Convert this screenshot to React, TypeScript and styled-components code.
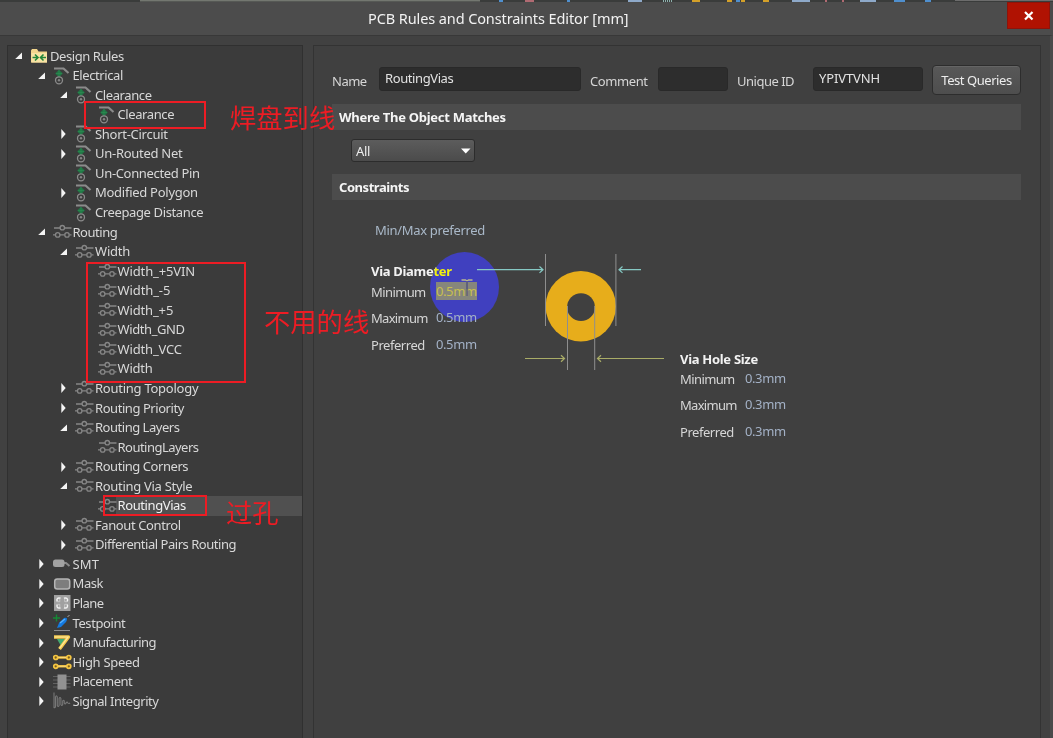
import React from 'react';
import styled, { createGlobalStyle } from 'styled-components';

const GlobalStyle = createGlobalStyle`
  html, body { margin: 0; padding: 0; background: #404040; overflow: hidden; }
  * { box-sizing: border-box; }
  body { font-family: 'Noto Sans', 'Open Sans', sans-serif; font-size: 13px; color: #d6d6d6; }
`;

const Window = styled.div`
  position: relative;
  display: flex;
  flex-direction: column;
  width: 1053px;
  height: 738px;
  background: #414141;
  overflow: hidden;
`;

const BackdropStrip = styled.svg`
  display: block;
  flex: none;
`;

const TitleBar = styled.header`
  display: flex;
  flex: none;
  height: 34px;
  background: #4c4c4c;
  border-bottom: 1px solid #383838;
  border-right: 3px solid #4a4a4a;
`;

const Title = styled.h1`
  flex: 1;
  margin: 0;
  padding-left: 368px;
  font-size: 14.5px;
  font-weight: 400;
  line-height: 32px;
  letter-spacing: -0.1px;
  color: #f2f2f2;
  white-space: nowrap;
`;

const CloseButton = styled.button`
  display: flex;
  align-items: center;
  justify-content: center;
  width: 43px;
  height: 27px;
  padding: 0;
  border: 1px solid #8f1309;
  background: #b01202;
`;

const Body = styled.div`
  display: flex;
  flex: 1;
  min-height: 0;
  padding: 9px 9px 0 7px;
  gap: 10px;
  border-right: 3px solid #4a4a4a;
`;

const Sidebar = styled.nav`
  flex: none;
  width: 296px;
  padding-top: 0.4px;
  border: 1px solid #303030;
  border-bottom: 0;
  background: #3b3b3b;
`;

const Row = styled.div<{ $level: number; $selected?: boolean }>`
  display: flex;
  align-items: center;
  height: 19.55px;
  padding-left: ${(p) => p.$level * 22.5}px;
  background: ${(p) =>
    p.$selected ? 'linear-gradient(90deg, transparent 108px, #505050 108px)' : 'none'};
  color: ${(p) => (p.$selected ? '#f0f0f0' : '#d8d8d8')};
  white-space: nowrap;
`;

const ArrowSlot = styled.span`
  display: flex;
  width: 15px;
  height: 18px;
  margin-right: 7px;
`;

const IconSlot = styled.span`
  display: flex;
  width: 20px;
  height: 18px;
`;

const RowLabel = styled.span<{ $ls?: number }>`
  line-height: 19px;
  letter-spacing: ${(p) => p.$ls ?? -0.2}px;
`;

const Detail = styled.main`
  flex: 1;
  padding: 19px 19px 0 18px;
  border: 1px solid #333;
  border-bottom: 0;
  background: #404040;
`;

const FormRow = styled.div`
  display: flex;
  align-items: flex-start;
  height: 39px;
`;

const FieldLabel = styled.label<{ $w: number; $ls?: number }>`
  width: ${(p) => p.$w}px;
  padding-top: 7px;
  line-height: 18px;
  letter-spacing: ${(p) => p.$ls ?? -0.2}px;
  white-space: nowrap;
`;

const Field = styled.div<{ $w: number; $gap: number; $ls?: number }>`
  width: ${(p) => p.$w}px;
  height: 24px;
  margin: 2px ${(p) => p.$gap}px 0 0;
  padding-left: 5px;
  border: 1px solid #292929;
  border-radius: 3px;
  background: #2d2d2d;
  color: #e2e2e2;
  line-height: 21px;
  letter-spacing: ${(p) => p.$ls ?? -0.2}px;
`;

const Button = styled.button`
  width: 89px;
  height: 30px;
  padding: 0;
  border: 1px solid #2d2d2d;
  border-radius: 4px;
  background: linear-gradient(#585858, #4e4e4e);
  box-shadow: inset 0 1px #656565;
  font: inherit;
  color: #ececec;
  letter-spacing: -0.45px;
  white-space: nowrap;
`;

const SectionHeader = styled.h2<{ $ls?: number }>`
  height: 26px;
  margin: 0;
  padding-left: 7px;
  background: #4c4c4c;
  color: #f5f5f5;
  font-size: 13px;
  font-weight: 700;
  line-height: 26px;
  letter-spacing: ${(p) => p.$ls ?? -0.28}px;
`;

const Select = styled.div`
  display: flex;
  align-items: center;
  justify-content: space-between;
  width: 124px;
  height: 23px;
  margin: 9px 0 12px 19px;
  padding: 0 3px 0 4px;
  border: 1px solid #2c2c2c;
  border-radius: 3px;
  background: linear-gradient(#5c5c5c, #4b4b4b);
  color: #ececec;
  letter-spacing: -0.3px;
`;

const Preference = styled.div`
  padding: 21px 0 0 43px;
  line-height: 18px;
  letter-spacing: -0.32px;
  color: #a9b8c8;
`;

const Constraints = styled.div`
  display: flex;
  padding: 14px 0 0 39px;
`;

const MeasureRow = styled.div`
  display: flex;
  align-items: center;
  height: 27px;
`;

const Measures = styled.section<{ $w: number; $top: number; $first: number }>`
  width: ${(p) => p.$w}px;
  padding-top: ${(p) => p.$top}px;
  ${MeasureRow}:first-of-type {
    height: ${(p) => p.$first}px;
    margin-bottom: 2px;
  }
`;

const MeasureTitle = styled.h3`
  margin: 0;
  font-size: 13px;
  font-weight: 700;
  line-height: 18px;
  letter-spacing: -0.3px;
  color: #f2f2f2;
  white-space: nowrap;
`;

const MeasureLabel = styled.span<{ $ls?: number }>`
  width: 65px;
  padding-top: 1px;
  letter-spacing: ${(p) => p.$ls ?? -0.6}px;
`;

const Value = styled.span<{ $selected?: boolean; $raised?: boolean }>`
  position: relative;
  z-index: ${(p) => (p.$raised ? 2 : 'auto')};
  width: 41px;
  height: 17px;
  line-height: 17px;
  letter-spacing: -0.4px;
  background: ${(p) => (p.$selected ? '#86867c' : 'none')};
  color: ${(p) => (p.$selected ? '#c8bf50' : '#a3b1c6')};
`;

const Diagram = styled.svg`
  position: relative;
  z-index: 2;
  flex: none;
  margin-right: 16px;
`;

const Spotlight = styled.div`
  position: absolute;
  left: 430px;
  top: 252px;
  width: 69px;
  height: 70px;
  border-radius: 50%;
  background: #0000ff;
  mix-blend-mode: difference;
`;

const SelectedValue = styled(Value)`
  z-index: 2;
  height: 18px;
  line-height: 18px;
`;

const Beam = styled.svg`
  position: absolute;
  left: 460px;
  top: 278px;
  z-index: 3;
`;

const MarkBox = styled.div<{ $x: number; $y: number; $w: number; $h: number }>`
  position: absolute;
  left: ${(p) => p.$x}px;
  top: ${(p) => p.$y}px;
  width: ${(p) => p.$w}px;
  height: ${(p) => p.$h}px;
  border: 2px solid #ed1c24;
  z-index: 4;
`;

const MarkText = styled.div<{ $x: number; $y: number }>`
  position: absolute;
  left: ${(p) => p.$x}px;
  top: ${(p) => p.$y}px;
  z-index: 4;
  font-family: 'Noto Sans CJK SC', sans-serif;
  font-size: 26.3px;
  font-weight: 400;
  line-height: 32px;
  color: #ed1c24;
  white-space: nowrap;
`;

type Kind =
  | 'folder' | 'electrical' | 'routing' | 'smt' | 'mask' | 'plane'
  | 'testpoint' | 'manufacturing' | 'speed' | 'placement' | 'signal';

const drawings: Record<Kind, React.ReactNode> = {
  folder: (
    <>
      <path d="M1 3.500V15.500H17V4.500H8.500L7 2H2z" fill="#f2d58c" />
      <path d="M1.500 6H17v9.500H1.500z" fill="#f8e3a4" />
      <path d="M2.500 10.500h5M5 7.500l3 3-3 3M16 10.500h-5M13.500 7.500l-3 3 3 3" stroke="#23863a" strokeWidth="1.600" fill="none" />
    </>
  ),
  electrical: (
    <>
      <path d="M1 1.500h9.500l5 4.500" stroke="#8b8b8b" strokeWidth="2.200" fill="none" />
      <path d="M6 2.800l3.800 3.700L6 10.200 2.200 6.500z" fill="#207544" />
      <path d="M6 3.500v6M3.500 6.500h5" stroke="#35995c" strokeWidth=".8" strokeDasharray="1 1" />
      <circle cx="6" cy="13.300" r="3.500" stroke="#8b8b8b" strokeWidth="1.300" fill="none" />
      <circle cx="6" cy="13.300" r="1.200" fill="#858585" />
    </>
  ),
  routing: (
    <g stroke="#868686" strokeWidth="1.300" fill="none">
      <path d="M1 5h6M11.500 5H18.500M0 11.900h2.500M7 11.900h4.500M16.500 11.900h2" />
      <circle cx="9.300" cy="4.700" r="2.200" />
      <circle cx="4.700" cy="11.900" r="2.200" />
      <circle cx="14" cy="11.900" r="2.200" />
    </g>
  ),
  smt: (
    <>
      <path d="M10 8h3l3.500 3" stroke="#8a8a8a" strokeWidth="2" fill="none" />
      <rect x="0" y="4.500" width="11.500" height="7.500" rx="2.500" fill="#a2a2a2" />
    </>
  ),
  mask: <rect x="1.700" y="4" width="15" height="10" rx="2.500" fill="#7d7d7d" stroke="#b5b5b5" strokeWidth="1.500" />,
  plane: (
    <>
      <rect x="1" y="1" width="16.500" height="16" fill="#a0a0a0" />
      <g stroke="#f2f2f2" strokeWidth="1.500" fill="none">
        <path d="M4.300 7.500C3 4.800 5 3.300 7.500 4.300M11 4.300c2.500-1 4.500.5 3.200 3.200M4.300 10.500c-1.300 2.700.7 4.200 3.200 3.200M11 13.700c2.500 1 4.500-.5 3.200-3.200" />
        <path d="M4.500 7.700h2.300V4.800M14 7.700h-2.300V4.800M4.500 10.300h2.300v2.900M14 10.300h-2.300v2.900" stroke="#cfcfcf" strokeWidth=".8" />
      </g>
    </>
  ),
  testpoint: (
    <>
      <path d="M4 14l2-5 5-5c3-1 4 0 2 4l-5 5z" fill="#1479df" />
      <path d="M7 9l5-4" stroke="#58b3ff" strokeWidth="1.500" />
      <path d="M0 4h7M3.500.5v7" stroke="#158a35" strokeWidth="1.300" />
      <path d="M14.500 3l2-2" stroke="#aaa" />
      <path d="M1 16.500h16" stroke="#8c8c8c" />
    </>
  ),
  manufacturing: (
    <>
      <path d="M4 5h9l-5 7z" fill="#43a972" />
      <path d="M1 3h14.500L6.500 15" stroke="#f3c94b" strokeWidth="3.400" fill="none" strokeLinejoin="round" />
      <path d="M1.500 3h13.500L6.500 14.500" stroke="#ffe9a0" strokeWidth="1.200" fill="none" />
    </>
  ),
  speed: (
    <>
      <path d="M3 4.500h12.500M3 13.300h12.500" stroke="#e9b93c" strokeWidth="2.600" />
      <path d="M3 4.500h12.500M3 13.300h12.500" stroke="#ffe28a" strokeWidth=".8" />
      <g fill="#7a5e1c" stroke="#f5c542" strokeWidth="1.700">
        <circle cx="2.700" cy="4.500" r="2" /><circle cx="15.800" cy="4.500" r="2" />
        <circle cx="2.700" cy="13.300" r="2" /><circle cx="15.800" cy="13.300" r="2" />
      </g>
    </>
  ),
  placement: (
    <>
      <path d="M0 3.500h17.500M0 7h17.500M0 10.500h17.500M0 14h17.500" stroke="#626262" />
      <rect x="4.500" y="1.500" width="9" height="15" fill="#929292" />
    </>
  ),
  signal: (
    <path
      d="M1 .5V15.500q1 .8 1.500-1V5q.9-2.500 1.800 0v8.500q.9 2 1.800 0V6.500q.9-2 1.800 0v6q.9 1.800 1.800 0V9q.9-1.500 1.600 0v2q1 2 2-.5 1-1 1.600.5.8 1 2.200 0"
      stroke="#777"
      strokeWidth="1.100"
      fill="none"
    />
  ),
};

function Icon({ kind }: { kind: Kind }) {
  return <svg width="19" height="18" viewBox="0 0 19 18">{drawings[kind]}</svg>;
}

type Node = [level: number, state: '' | 'open' | 'shut', kind: Kind, label: string, spacing?: number];

const nodes: Node[] = [
  [0, 'open', 'folder', 'Design Rules', -0.43],
  [1, 'open', 'electrical', 'Electrical', -0.4],
  [2, 'open', 'electrical', 'Clearance', -0.4],
  [3, '', 'electrical', 'Clearance', -0.4],
  [2, 'shut', 'electrical', 'Short-Circuit', -0.28],
  [2, 'shut', 'electrical', 'Un-Routed Net', -0.28],
  [2, '', 'electrical', 'Un-Connected Pin', -0.33],
  [2, 'shut', 'electrical', 'Modified Polygon', -0.27],
  [2, '', 'electrical', 'Creepage Distance', -0.38],
  [1, 'open', 'routing', 'Routing', -0.48],
  [2, 'open', 'routing', 'Width'],
  [3, '', 'routing', 'Width_+5VIN', -0.12],
  [3, '', 'routing', 'Width_-5', -0.1],
  [3, '', 'routing', 'Width_+5', -0.14],
  [3, '', 'routing', 'Width_GND', -0.4],
  [3, '', 'routing', 'Width_VCC', -0.15],
  [3, '', 'routing', 'Width'],
  [2, 'shut', 'routing', 'Routing Topology', -0.25],
  [2, 'shut', 'routing', 'Routing Priority', -0.44],
  [2, 'open', 'routing', 'Routing Layers', -0.48],
  [3, '', 'routing', 'RoutingLayers', -0.52],
  [2, 'shut', 'routing', 'Routing Corners', -0.45],
  [2, 'open', 'routing', 'Routing Via Style', -0.3],
  [3, '', 'routing', 'RoutingVias', -0.4],
  [2, 'shut', 'routing', 'Fanout Control', -0.4],
  [2, 'shut', 'routing', 'Differential Pairs Routing', -0.47],
  [1, 'shut', 'smt', 'SMT', 0.1],
  [1, 'shut', 'mask', 'Mask', -0.4],
  [1, 'shut', 'plane', 'Plane', -0.55],
  [1, 'shut', 'testpoint', 'Testpoint', -0.4],
  [1, 'shut', 'manufacturing', 'Manufacturing', -0.56],
  [1, 'shut', 'speed', 'High Speed', -0.3],
  [1, 'shut', 'placement', 'Placement', -0.5],
  [1, 'shut', 'signal', 'Signal Integrity', -0.44],
];

function Tree() {
  return (
    <Sidebar>
      {nodes.map(([level, state, kind, label, spacing], i) => (
        <Row key={i} $level={level} $selected={label === 'RoutingVias'}>
          <ArrowSlot>
            {state && (
              <svg width="15" height="18">
                <path d={state === 'open' ? 'M14 5.500v6.500H7.200z' : 'M8.300 4v10l4.400-5z'} fill="#f4f4f4" />
              </svg>
            )}
          </ArrowSlot>
          <IconSlot><Icon kind={kind} /></IconSlot>
          <RowLabel $ls={spacing}>{label}</RowLabel>
        </Row>
      ))}
    </Sidebar>
  );
}

function ViaDiagram() {
  return (
    <Diagram width="187" height="118" viewBox="477 253 187 118">
      <circle cx="580.800" cy="306.300" r="35.200" fill="#e7ad1b" />
      <circle cx="581" cy="307.200" r="13.900" fill="#404040" />
      <g stroke="#8e8e8e" fill="none">
        <path d="M545.500 254v72M615.900 254v72M567.500 306v64M594.700 306v64" />
      </g>
      <g stroke="#86c9c4" strokeWidth="1.200" fill="none">
        <path d="M477 269.700h66M539.500 266.500l3.500 3.200-3.500 3.200M641 269.700h-22M622.500 266.500l-3.500 3.200 3.500 3.200" />
      </g>
      <g stroke="#a9ac67" strokeWidth="1.200" fill="none">
        <path d="M525 358.500h40M561 355.300l3.500 3.200-3.500 3.200M664 358.500h-66.500M601 355.300l-3.500 3.200 3.500 3.200" />
      </g>
    </Diagram>
  );
}

export default function App() {
  return (
    <Window>
      <GlobalStyle />
      <BackdropStrip width="1053" height="2">
        <rect width="1053" height="2" fill="#3a3c3b" />
        <rect x="140" width="340" height="1.500" fill="#737770" />
        <rect x="955" width="98" height="1" fill="#6c6c6c" />
        <path d="M499 1h4M567 1h3M736 1h4M894 1h11M925 1h6" stroke="#4f8fce" strokeWidth="2" />
        <path d="M628 1h14M792 1h18M860 1h16" stroke="#8ea9c9" strokeWidth="2" />
        <path d="M692 1h8M727 1h5M741 1h4M763 1h6" stroke="#d4a029" strokeWidth="2" />
        <path d="M525 1h9M825 1h2M842 1h2" stroke="#b06a72" strokeWidth="2" />
        <path d="M663 1h10" stroke="#8db1ae" strokeWidth="2" strokeDasharray="1 1" />
      </BackdropStrip>
      <TitleBar>
        <Title>PCB Rules and Constraints Editor [mm]</Title>
        <CloseButton aria-label="Close">
          <svg width="12" height="12"><path d="M2 2l7.500 7.500M9.500 2L2 9.500" stroke="#fff" strokeWidth="2.200" /></svg>
        </CloseButton>
      </TitleBar>
      <Body>
        <Tree />
        <Detail>
          <FormRow>
            <FieldLabel $w={47} $ls={-0.5}>Name</FieldLabel>
            <Field $w={202} $gap={9} $ls={-0.4}>RoutingVias</Field>
            <FieldLabel $w={68} $ls={-0.4}>Comment</FieldLabel>
            <Field $w={70} $gap={9} />
            <FieldLabel $w={76} $ls={-0.5}>Unique ID</FieldLabel>
            <Field $w={110} $gap={9} $ls={-0.12}>YPIVTVNH</Field>
            <Button>Test Queries</Button>
          </FormRow>
          <SectionHeader>Where The Object Matches</SectionHeader>
          <Select>
            All
            <svg width="10" height="6"><path d="M0 .5h9.500L4.750 5.500z" fill="#fff" /></svg>
          </Select>
          <SectionHeader $ls={-0.45}>Constraints</SectionHeader>
          <Preference>Min/Max preferred</Preference>
          <Constraints>
            <Measures $w={106} $top={9} $first={22}>
              <MeasureTitle>Via Diameter</MeasureTitle>
              <MeasureRow><MeasureLabel>Minimum</MeasureLabel><SelectedValue $selected>0.5mm</SelectedValue></MeasureRow>
              <MeasureRow><MeasureLabel $ls={-0.7}>Maximum</MeasureLabel><Value $raised>0.5mm</Value></MeasureRow>
              <MeasureRow><MeasureLabel $ls={-0.45}>Preferred</MeasureLabel><Value>0.5mm</Value></MeasureRow>
            </Measures>
            <ViaDiagram />
            <Measures $w={110} $top={97} $first={21}>
              <MeasureTitle>Via Hole Size</MeasureTitle>
              <MeasureRow><MeasureLabel>Minimum</MeasureLabel><Value>0.3mm</Value></MeasureRow>
              <MeasureRow><MeasureLabel $ls={-0.7}>Maximum</MeasureLabel><Value>0.3mm</Value></MeasureRow>
              <MeasureRow><MeasureLabel $ls={-0.45}>Preferred</MeasureLabel><Value>0.3mm</Value></MeasureRow>
            </Measures>
          </Constraints>
        </Detail>
      </Body>
      <Spotlight />
      <Beam width="14" height="20">
        <path d="M1.500 2h4l1.500 1 1.500-1h4" stroke="#b9b791" strokeWidth="1.300" fill="none" />
        <path d="M7 3v15" stroke="#4a4d80" strokeWidth="1.300" />
      </Beam>
      <MarkBox $x={84} $y={101} $w={122} $h={28} />
      <MarkBox $x={86} $y={262} $w={160} $h={121} />
      <MarkBox $x={103} $y={495} $w={104} $h={21} />
      <MarkText $x={230} $y={101}>焊盘到线</MarkText>
      <MarkText $x={264} $y={305}>不用的线</MarkText>
      <MarkText $x={226} $y={496}>过孔</MarkText>
    </Window>
  );
}
